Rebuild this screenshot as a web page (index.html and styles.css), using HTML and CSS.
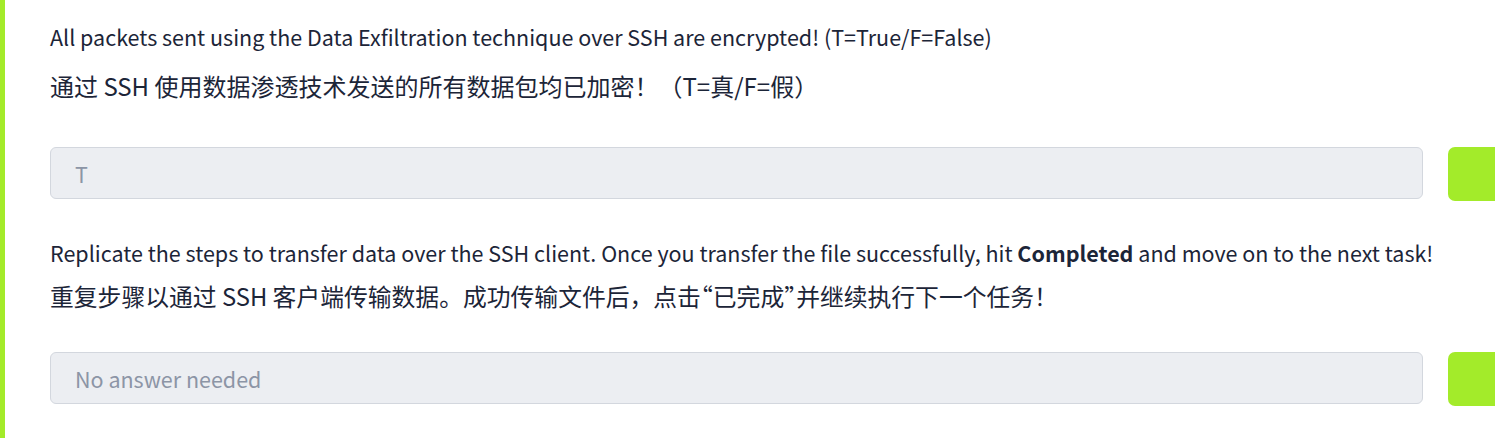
FILE: index.html
```html
<!DOCTYPE html>
<html lang="en">
<head>
<meta charset="utf-8">
<title>Task</title>
<link rel="stylesheet" href="styles.css">
</head>
<body>
<div class="task">
  <div class="question">
    <p class="en">All packets sent using the Data Exfiltration technique over SSH are encrypted! (T=True/F=False)</p>
    <p class="zh">通过 SSH 使用数据渗透技术发送的所有数据包均已加密！<span class="tight"> </span>（T=真/F=假）</p>
  </div>
  <div class="answer-row">
    <div class="answer-input">T</div>
    <div class="submit-btn"></div>
  </div>
  <div class="question q2">
    <p class="en">Replicate the steps to transfer data over the SSH client. Once you transfer the file successfully, hit <strong>Completed</strong> and move on to the next task!</p>
    <p class="zh zh2">重复步骤以通过 SSH 客户端传输数据。成功传输文件后，点击<span class="half">“</span>已完成<span class="half">”</span>并继续执行下一个任务！</p>
  </div>
  <div class="answer-row row2">
    <div class="answer-input">No answer needed</div>
    <div class="submit-btn"></div>
  </div>
</div>
</body>
</html>
```

FILE: styles.css
```css
html, body {
  margin: 0;
  padding: 0;
  overflow: hidden;
  background: #ffffff;
}

body {
  font-family: "Noto Sans CJK SC", sans-serif;
  color: #1c2538;
  width: 1495px;
  height: 438px;
}

.task {
  border-left: 5px solid #a3eb2a;
  padding-left: 45px;
  padding-top: 21px;
  height: 438px;
  box-sizing: border-box;
}

.question p {
  margin: 0;
}

.en {
  font-size: 21.5px;
  line-height: 32px;
}

.en strong {
  font-weight: 700;
}

.zh {
  font-size: 24px;
  line-height: 32px;
  margin-top: 17px !important;
}

.zh2 {
  font-size: 23.8px;
  margin-top: 11px !important;
}

.tight {
  word-spacing: -11px;
}

.half {
  font-feature-settings: "halt";
}

.q2 {
  margin-top: 36px;
}

.answer-row {
  display: flex;
  gap: 25px;
  align-items: flex-start;
  margin-top: 45px;
  width: 1545px;
}

.row2 {
  margin-top: 40px;
}

.answer-input {
  width: 1373px;
  height: 52px;
  flex: none;
  box-sizing: border-box;
  background: #eceef2;
  border: 1px solid #d3d7de;
  border-radius: 6px;
  padding-left: 24px;
  display: flex;
  align-items: center;
  font-size: 21.5px;
  color: #8c95a6;
}

.submit-btn {
  width: 100px;
  height: 54px;
  background: #a3eb2a;
  border-radius: 7px;
  flex: none;
}
```
